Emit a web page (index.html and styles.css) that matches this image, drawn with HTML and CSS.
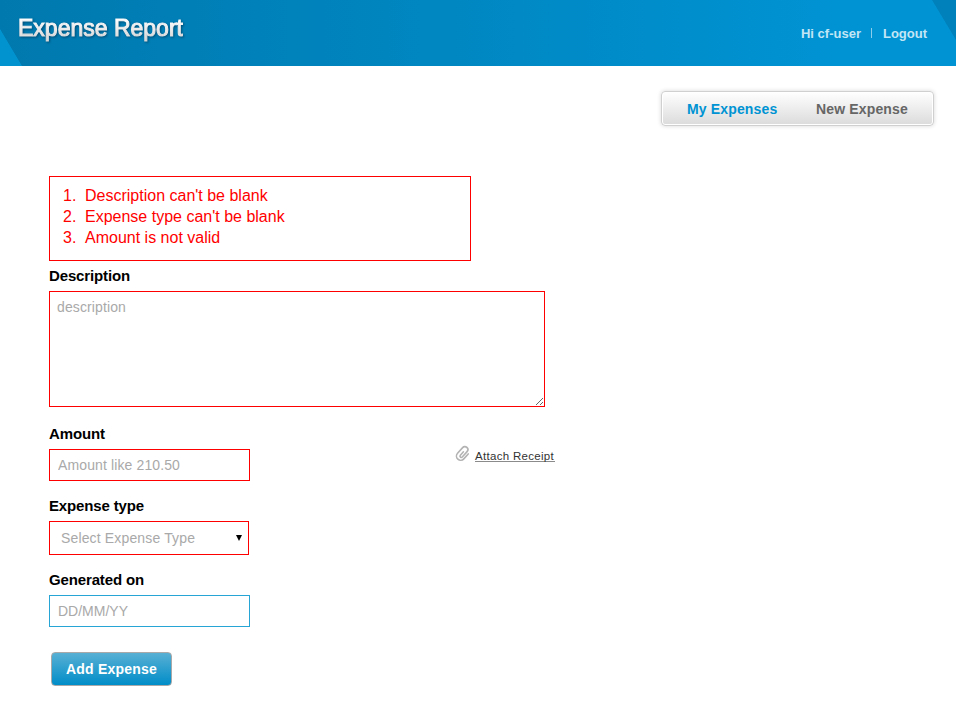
FILE: index.html
```html
<!DOCTYPE html>
<html lang="en">
<head>
<meta charset="utf-8">
<title>Expense Report</title>
<link rel="stylesheet" href="styles.css">
</head>
<body>
<header class="header">
  <h1 class="logo">Expense Report</h1>
  <div class="user"><span class="user-name">Hi cf-user</span><a class="logout">Logout</a></div>
</header>
<nav class="nav"><a class="nav-link active">My Expenses</a><a class="nav-link new">New Expense</a></nav>
<form class="form">
  <ol class="errors">
    <li>Description can't be blank</li>
    <li>Expense type can't be blank</li>
    <li>Amount is not valid</li>
  </ol>
  <label class="label" for="description">Description</label>
  <textarea class="field description invalid" id="description" placeholder="description"></textarea>
  <div class="row">
    <div class="amount-group">
      <label class="label" for="amount">Amount</label>
      <input class="field amount invalid" id="amount" placeholder="Amount like 210.50">
    </div>
    <a class="attach">
      <svg class="clip" viewBox="0 0 16 18" width="16" height="18"><path transform="translate(7.8 8.4) rotate(42)" d="M4.4-3.2V3.4a4.2 4.2 0 0 1-8.4 0V-4.2a3 3 0 0 1 6 0V3a1.2 1.2 0 0 1-2.6 0V-1.6" fill="none" stroke="#b3b3b3" stroke-width="1.6" stroke-linecap="round"/></svg>
      <span class="attach-text">Attach Receipt</span>
    </a>
  </div>
  <label class="label type-label">Expense type</label>
  <div class="field select invalid"><span>Select Expense Type</span><svg class="arrow" viewBox="0 0 6 6" width="6" height="6"><path d="M0 0h6L3 6z"/></svg></div>
  <label class="label date-label" for="date">Generated on</label>
  <input class="field date" id="date" placeholder="DD/MM/YY">
  <button class="submit" type="button">Add Expense</button>
</form>
</body>
</html>
```
FILE: styles.css
```css
* { box-sizing: border-box; }
body {
  margin: 0;
  background: #fff;
  font-family: "Liberation Sans", Arial, sans-serif;
}
.header {
  height: 66px;
  padding: 0 29px 0 18px;
  display: flex;
  justify-content: space-between;
  background:
    linear-gradient(to top right, #0093d0 49%, transparent 51%) 0 100% / 22px 37px no-repeat,
    linear-gradient(to bottom left, #0081bb 49%, transparent 51%) 100% 0 / 24px 40px no-repeat,
    linear-gradient(90deg, #0079ae, #0093d3 88%);
}
.logo {
  margin: 14px 0 0;
  font-size: 23px;
  line-height: 28px;
  height: 30px;
  font-weight: normal;
  letter-spacing: 0;
  color: transparent;
  -webkit-text-stroke: 1.1px transparent;
  background: linear-gradient(#fff 15%, #d8d8d8 85%);
  -webkit-background-clip: text;
  background-clip: text;
  filter: drop-shadow(1px 1px 1px rgba(0, 40, 70, .55));
}
.user {
  margin-top: 26px;
  display: flex;
  height: 15px;
  font-size: 13px;
  line-height: 15px;
  font-weight: bold;
  color: #c3e6f5;
}
.user-name { padding-right: 10px; }
.logout {
  padding-left: 12px;
  background: linear-gradient(#8bcdea, #8bcdea) 0 2px / 1px 10px no-repeat;
}
.nav {
  width: 273px;
  height: 35px;
  margin: 25px 22px 0 auto;
  padding-left: 24px;
  display: flex;
  border: 1px solid #d0d0d0;
  border-radius: 4px;
  box-shadow: inset 0 0 0 1px #fff, 0 0 4px rgba(0, 0, 0, .16);
  background: linear-gradient(#fff, #dbdbdb);
  font-size: 14px;
  line-height: 34px;
  font-weight: bold;
  letter-spacing: .15px;
}
.nav-link { padding-left: 1px; color: #666; }
.nav-link.active { width: 129px; color: #0093d3; }
.form {
  margin: 50px 0 0 49px;
  display: flex;
  flex-direction: column;
  align-items: flex-start;
}
.errors {
  width: 422px;
  height: 85px;
  margin: 0 0 6px;
  padding: 8px 0 0 13px;
  border: 1px solid #f00;
  color: #f00;
  font-size: 16px;
  line-height: 21px;
  list-style: none;
  counter-reset: error;
}
.errors li { display: flex; counter-increment: error; }
.errors li::before { content: counter(error) "."; width: 22px; }
.label {
  display: block;
  height: 17px;
  margin-bottom: 7px;
  font-size: 15px;
  line-height: 17px;
  font-weight: bold;
  letter-spacing: -.14px;
  color: #000;
}
.field {
  display: block;
  width: 201px;
  height: 32px;
  margin: 0;
  padding: 0 8px;
  border: 1px solid #27a5d5;
  border-radius: 0;
  background: #fff;
  font: 14px "Liberation Sans", Arial, sans-serif;
  letter-spacing: .12px;
  color: #a9a9a9;
}
.field::placeholder { color: #a9a9a9; opacity: 1; }
.field.invalid { border-color: #f00; }
.field.date { letter-spacing: 0; }
.description {
  width: 496px;
  height: 116px;
  padding: 7px;
  margin-bottom: 18px;
}
.row { width: 506px; display: flex; justify-content: space-between; }
.attach { display: flex; margin-top: 20px; height: 18px; }
.clip { margin-right: 4px; }
.attach-text {
  width: 80px;
  height: 17px;
  border-bottom: 1px solid #8b8b8b;
  font-size: 11.5px;
  line-height: 22px;
  letter-spacing: .3px;
  white-space: nowrap;
  color: #333;
}
.type-label { margin-top: 16px; }
.select {
  width: 200px;
  height: 34px;
  padding: 0 6px 0 11px;
  display: flex;
  align-items: center;
  justify-content: space-between;
  letter-spacing: .15px;
}
.arrow { fill: #000; }
.date-label { margin-top: 16px; }
.submit {
  width: 121px;
  height: 34px;
  margin: 25px 0 0 2px;
  padding: 0;
  border: 1px solid #a9a9a9;
  border-radius: 4px;
  background: linear-gradient(#58b0d4, #008dc8);
  font: bold 14px "Liberation Sans", Arial, sans-serif;
  letter-spacing: .2px;
  color: #fff;
}
```
